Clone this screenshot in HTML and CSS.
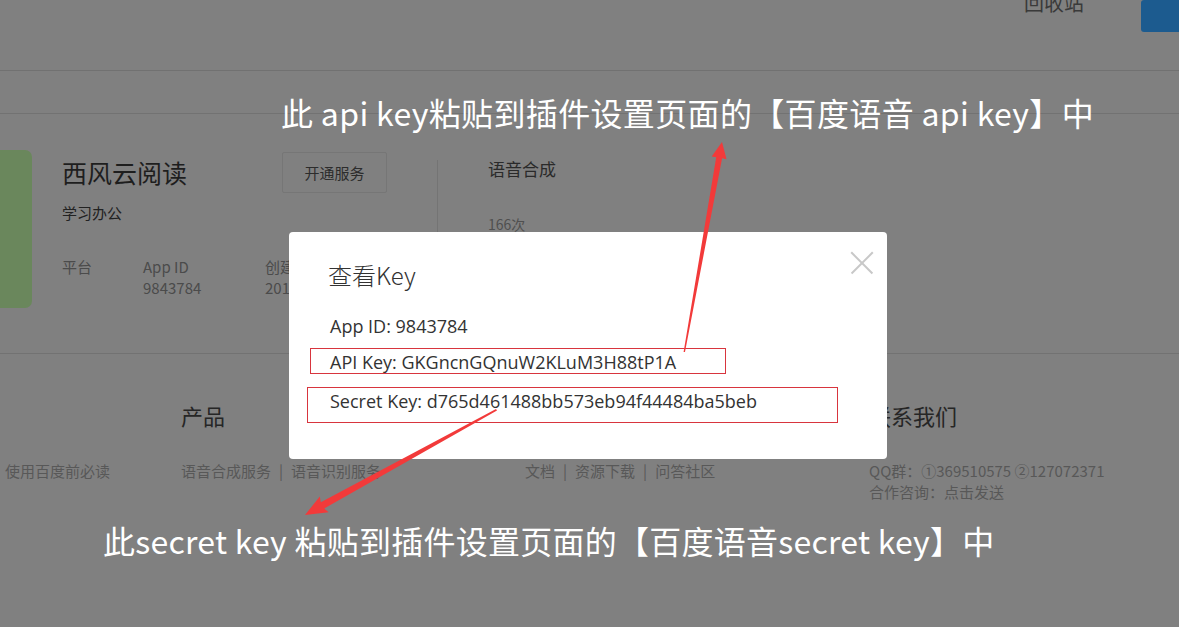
FILE: index.html
```html
<!DOCTYPE html>
<html lang="zh-CN">
<head>
<meta charset="utf-8">
<title>查看Key</title>
<link rel="stylesheet" href="styles.css">
</head>
<body>
<div class="page">
  <header class="topbar">
    <span class="recycle">回收站</span>
    <span class="blue-btn"></span>
  </header>
  <div class="band"></div>
  <section class="app">
    <div class="app-card"></div>
    <div class="app-info">
      <div class="title-row">
        <h1 class="app-name">西风云阅读</h1>
        <button class="open-btn">开通服务</button>
      </div>
      <div class="app-cat">学习办公</div>
      <div class="meta">
        <div class="meta-col w1"><div>平台</div><div>&nbsp;</div></div>
        <div class="meta-col w2"><div>App ID</div><div>9843784</div></div>
        <div class="meta-col"><div>创建时间</div><div>2017-08-03</div></div>
      </div>
    </div>
    <div class="divider"></div>
    <div class="usage">
      <div class="usage-title">语音合成</div>
      <div class="usage-count">166次</div>
    </div>
  </section>
  <footer class="footer">
    <div class="fcol">
      <div class="ftitle">&nbsp;</div>
      <div class="flink">使用百度前必读</div>
    </div>
    <div class="fcol">
      <div class="ftitle">产品</div>
      <div class="flink">语音合成服务<span class="sep">|</span>语音识别服务</div>
    </div>
    <div class="fcol">
      <div class="ftitle">&nbsp;</div>
      <div class="flink">文档<span class="sep">|</span>资源下载<span class="sep">|</span>问答社区</div>
    </div>
    <div class="fcol">
      <div class="ftitle">联系我们</div>
      <div class="flink">QQ群：①369510575 ②127072371</div>
      <div class="flink">合作咨询：点击发送</div>
    </div>
  </footer>

  <div class="modal">
    <div class="modal-title">查看Key</div>
    <span class="modal-close"></span>
    <div class="krow first">App ID: 9843784</div>
    <div class="krow second">API Key: GKGncnGQnuW2KLuM3H88tP1A</div>
    <div class="krow third">Secret Key: d765d461488bb573eb94f44484ba5beb</div>
  </div>

  <div class="mark mark-api"></div>
  <div class="mark mark-secret"></div>

  <svg class="arrows" width="1179" height="627" viewBox="0 0 1179 627">
    <polygon fill="#f23a3a" points="683.6,352 716.2,157.3 711.7,156.5 722,142 726.5,159.2 722.1,158.3 685,352"/>
    <polygon fill="#f23a3a" points="496,409 320.8,502.2 319.8,496.4 305,515 328.6,512.2 324.2,508.4 497,410.5"/>
  </svg>

  <div class="note note-api">此 api key粘贴到插件设置页面的【百度语音 api key】中</div>
  <div class="note note-secret">此secret key 粘贴到插件设置页面的【百度语音secret key】中</div>
</div>
</body>
</html>
```

FILE: styles.css
```css
* { box-sizing: border-box; }
html, body { margin: 0; padding: 0; }
body {
  background: #808080;
  font-family: "Noto Sans CJK SC", "Noto Sans", sans-serif;
  color: #222;
}
.page {
  position: relative;
  width: 1179px;
  height: 627px;
  overflow: hidden;
}
.topbar {
  height: 71px;
  border-bottom: 1px solid #717171;
  display: flex;
  justify-content: flex-end;
  align-items: flex-start;
}
.recycle {
  font-size: 20px;
  line-height: 20px;
  margin-top: -7px;
  color: #3a3a3a;
  margin-right: 57px;
}
.blue-btn {
  width: 60px;
  height: 32px;
  background: #1c5b8f;
  border-radius: 3px;
  margin-right: -22px;
}
.band {
  height: 43px;
  border-bottom: 1px solid #727272;
}
.app {
  height: 240px;
  border-bottom: 1px solid #727272;
  display: flex;
  align-items: flex-start;
  padding-top: 36px;
}
.app-card {
  width: 32px;
  height: 158px;
  background: #6a875c;
  border-radius: 0 7px 7px 0;
}
.app-info {
  margin-left: 30px;
  padding-top: 2px;
  width: 375px;
}
.title-row {
  display: flex;
  align-items: center;
  height: 41px;
}
.app-name {
  margin: 0;
  width: 220px;
  font-size: 25px;
  font-weight: 400;
  line-height: 41px;
  color: #1e1e1e;
}
.open-btn {
  width: 105px;
  height: 41px;
  background: transparent;
  border: 1px solid #767676;
  border-radius: 2px;
  font-family: inherit;
  font-size: 15px;
  color: #2c2c2c;
  padding: 0;
}
.app-cat {
  margin-top: 9px;
  font-size: 15px;
  line-height: 22px;
  color: #222;
}
.meta {
  display: flex;
  margin-top: 32px;
  font-size: 15px;
  line-height: 21px;
  color: #4b4b4b;
}
.meta-col.w1 { width: 81px; }
.meta-col.w2 { width: 122px; }
.divider {
  width: 1px;
  height: 145px;
  margin-top: 10px;
  background: #747474;
}
.usage { padding-left: 50px; }
.usage-title {
  margin-top: 7px;
  font-size: 17px;
  line-height: 24px;
  color: #2a2a2a;
}
.usage-count {
  margin-top: 32px;
  font-size: 14px;
  line-height: 22px;
  color: #4f4f4f;
}
.footer {
  display: grid;
  grid-template-columns: 176px 344px 344px 1fr;
  padding-left: 5px;
  padding-top: 46px;
}
.ftitle {
  font-size: 22px;
  line-height: 30px;
  color: #262626;
  margin-bottom: 30px;
}
.flink {
  font-size: 15px;
  line-height: 21px;
  color: #585858;
  white-space: nowrap;
}
.sep { margin: 0 8px; }
.modal {
  position: absolute;
  left: 289px;
  top: 232px;
  width: 598px;
  height: 227px;
  background: #fff;
  border-radius: 4px;
  padding: 27px 0 0 39px;
}
.modal-title {
  font-size: 24px;
  font-weight: 300;
  line-height: 32px;
  color: #333;
}
.modal-close {
  position: absolute;
  right: 14px;
  top: 20px;
  width: 22px;
  height: 22px;
}
.modal-close::before,
.modal-close::after {
  content: "";
  position: absolute;
  left: -4px;
  top: 10px;
  width: 30px;
  height: 1.5px;
  background: #c8c8c8;
  transform: rotate(45deg);
}
.modal-close::after { transform: rotate(-45deg); }
.krow {
  padding-left: 2px;
  font-family: "Open Sans", "Noto Sans", sans-serif;
  font-size: 18px;
  line-height: 24px;
  color: #333;
}
.krow.first { margin-top: 23px; }
.krow.second { margin-top: 12px; }
.krow.third { margin-top: 15px; }
.mark {
  position: absolute;
  border: 1px solid #d8353e;
}
.mark-api { left: 310px; top: 348px; width: 416px; height: 26px; }
.mark-secret { left: 307px; top: 387px; width: 531px; height: 36px; }
.arrows {
  position: absolute;
  left: 0;
  top: 0;
}
.note {
  position: absolute;
  color: #fff;
  font-size: 32px;
  line-height: 40px;
  white-space: nowrap;
}
.note-api { left: 281px; top: 92px; letter-spacing: 0.35px; }
.note-secret { left: 103px; top: 520px; letter-spacing: 0.25px; }
```
